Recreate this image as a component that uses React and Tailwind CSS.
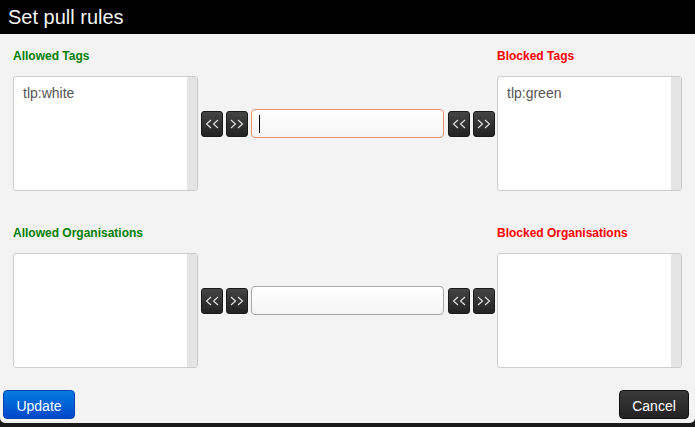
const FONT = { fontFamily: '"Liberation Sans", Arial, sans-serif' }

function ListBox({ items }) {
  return (
    <div className="w-[185px] h-[115px] shrink-0 flex bg-white border border-[#cccccc] rounded-[3px] overflow-hidden">
      <div className="flex-1 pl-[9px] pt-[6px] text-[14px] leading-[20px] text-[#555555]">
        {items.map(t => (
          <div key={t}>{t}</div>
        ))}
      </div>
      <div className="w-[10px] bg-[#e4e4e4]" />
    </div>
  )
}

function Chevrons({ dir }) {
  const pts = dir === 'left' ? ['6,1 1.5,5 6,9', '13,1 8.5,5 13,9'] : ['1,1 5.5,5 1,9', '8,1 12.5,5 8,9']
  return (
    <svg width="14" height="10" viewBox="0 0 14 10" fill="none" stroke="#e6e6e6" strokeWidth="1.1">
      {pts.map(p => (
        <polyline key={p} points={p} />
      ))}
    </svg>
  )
}

function ArrowBtn({ dir }) {
  return (
    <div className="w-[22px] h-[26px] shrink-0 rounded-[3px] bg-gradient-to-b from-[#444444] to-[#222222] border border-[#1a1a1a] flex items-center justify-center">
      <Chevrons dir={dir} />
    </div>
  )
}

function Section({ left, right, items = [[], []], focused }) {
  return (
    <div className="flex flex-col w-[669px]">
      <div className="flex justify-between h-[20px] items-center text-[12px] font-bold">
        <span className="text-[#008000]">{left}</span>
        <span className="text-[#ff0000] w-[185px]">{right}</span>
      </div>
      <div className="flex items-start mt-[10px]">
        <ListBox items={items[0]} />
        <div className="ml-[3px] mt-[35px] flex gap-[3px]">
          <ArrowBtn dir="left" />
          <ArrowBtn dir="right" />
        </div>
        <div
          className={`ml-[3px] mt-[33px] w-[193px] h-[29px] rounded-[4px] border bg-gradient-to-b from-[#ffffff] to-[#f4f4f4] flex items-center pl-[7px] ${
            focused ? 'border-[#ee8f70]' : 'border-[#a9a9a9]'
          }`}
        >
          {focused && <span className="w-[1px] h-[18px] bg-black" />}
        </div>
        <div className="ml-[4px] mt-[35px] flex gap-[3px]">
          <ArrowBtn dir="left" />
          <ArrowBtn dir="right" />
        </div>
        <div className="ml-[2px]">
          <ListBox items={items[1]} />
        </div>
      </div>
    </div>
  )
}

export default function App() {
  return (
    <div style={FONT} className="w-[695px] h-[427px] bg-[#1a1a1a] overflow-hidden">
      <div className="h-[34px] bg-black flex items-center pl-[8px] text-[#f5f5f5] text-[20px]">
        Set pull rules
      </div>
      <div className="h-[389px] bg-[#f3f3f3] rounded-b-[5px] pl-[13px] pt-[12px] flex flex-col">
        <Section left="Allowed Tags" right="Blocked Tags" items={[['tlp:white'], ['tlp:green']]} focused />
        <div className="mt-[32px]">
          <Section left="Allowed Organisations" right="Blocked Organisations" />
        </div>
        <div className="flex justify-between mt-[22px] -ml-[10px] mr-[6px]">
          <button className="w-[72px] h-[29px] pt-[3px] rounded-[4px] bg-gradient-to-b from-[#0a7be0] to-[#0047cc] border border-[#0040b0] text-white text-[14px]">
            Update
          </button>
          <button className="w-[70px] h-[29px] pt-[3px] rounded-[4px] bg-gradient-to-b from-[#3a3a3a] to-[#222222] border border-[#111111] text-white text-[14px]">
            Cancel
          </button>
        </div>
      </div>
    </div>
  )
}
